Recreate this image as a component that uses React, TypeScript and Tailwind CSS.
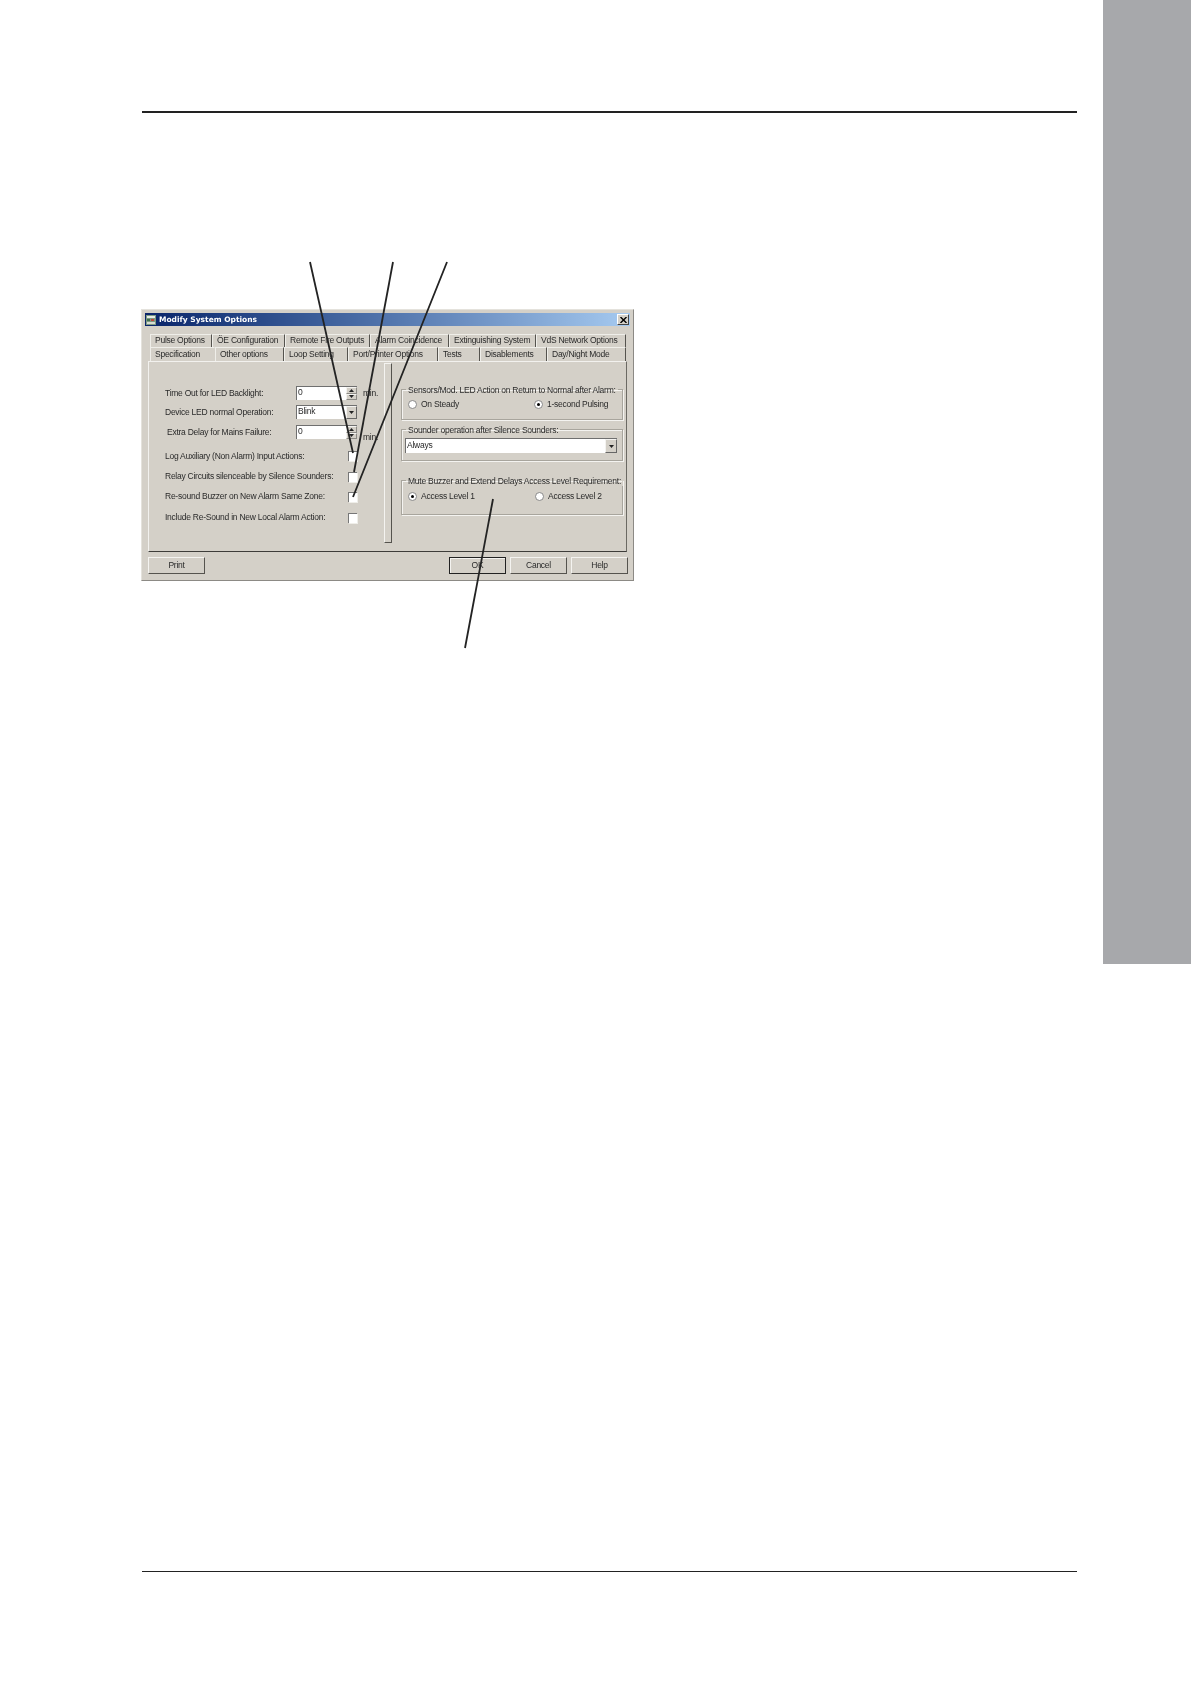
const rowOne = [
  { label: 'Pulse Options', width: 'w-[62px]' },
  { label: 'ÖE Configuration', width: 'w-[73px]' },
  { label: 'Remote Fire Outputs', width: 'w-[85px]' },
  { label: 'Alarm Coincidence', width: 'w-[79px]' },
  { label: 'Extinguishing System', width: 'w-[87px]' },
  { label: 'VdS Network Options', width: 'w-[90px]' },
];

const rowTwo = [
  { label: 'Specification', width: 'w-[65px]', edge: 'border-r-transparent' },
  { label: 'Other options', width: 'w-[69px]', edge: 'border-r-[#55534e] bg-[#d4d0c8] relative z-[1] -mb-[2px]' },
  { label: 'Loop Setting', width: 'w-[64px]', edge: 'border-r-[#55534e]' },
  { label: 'Port/Printer Options', width: 'w-[90px]', edge: 'border-r-[#55534e]' },
  { label: 'Tests', width: 'w-[42px]', edge: 'border-r-[#55534e]' },
  { label: 'Disablements', width: 'w-[67px]', edge: 'border-r-[#55534e]' },
  { label: 'Day/Night Mode', width: 'w-[79px]', edge: 'border-r-[#55534e]' },
];

function Tab({ label, width, edge = 'border-r-[#55534e]' }: { label: string; width: string; edge?: string }) {
  return (
    <div className={`${width} ${edge} h-full flex items-center pl-[4px] pb-[1px] whitespace-nowrap border-t border-l border-r border-t-[#efeee9] border-l-[#efeee9]`}>
      {label}
    </div>
  );
}

function Arrow({ up }: { up?: boolean }) {
  return (
    <svg width="5" height="3" viewBox="0 0 5 3" className={up ? 'rotate-180' : ''}>
      <path d="M0 0h5L2.5 3z" fill="#222" />
    </svg>
  );
}

function Spinner() {
  return (
    <div className="flex flex-col w-[11px] h-full">
      <div className="flex-1 bg-[#d4d0c8] flex items-center justify-center border border-t-[#f4f3f0] border-l-[#f4f3f0] border-r-[#8c8a85] border-b-[#8c8a85]">
        <Arrow up />
      </div>
      <div className="flex-1 bg-[#d4d0c8] flex items-center justify-center border border-t-[#f4f3f0] border-l-[#f4f3f0] border-r-[#8c8a85] border-b-[#8c8a85]">
        <Arrow />
      </div>
    </div>
  );
}

function DropButton({ size }: { size: string }) {
  return (
    <div className={`${size} h-full bg-[#d4d0c8] flex items-center justify-center border border-t-[#f4f3f0] border-l-[#f4f3f0] border-r-[#666] border-b-[#666]`}>
      <Arrow />
    </div>
  );
}

function Field({ text, spin }: { text: string; spin?: boolean }) {
  return (
    <div className="w-[61px] h-[14px] bg-white flex border-t border-l border-t-[#6f6f6f] border-l-[#6f6f6f]">
      <span className="flex-1 pl-[1px] leading-[10px]">{text}</span>
      {spin ? <Spinner /> : <DropButton size="w-[11px]" />}
    </div>
  );
}

function Check() {
  return <div className="w-[9px] h-[10px] bg-white border-t border-l border-t-[#777] border-l-[#777] shadow-[1px_1px_0_#efeee9]" />;
}

function Radio({ label, on, width }: { label: string; on?: boolean; width: string }) {
  return (
    <div className={`${width} flex items-center gap-[4px]`}>
      <div className="w-[9px] h-[9px] rounded-full bg-white border border-[#888] flex items-center justify-center">
        {on && <div className="w-[3px] h-[3px] rounded-full bg-black" />}
      </div>
      <span>{label}</span>
    </div>
  );
}

function Group({ title, size, children }: { title: string; size: string; children: React.ReactNode }) {
  return (
    <fieldset className={`${size} w-[222px] min-w-0 border border-[#a8a59d] shadow-[1px_1px_0_#f4f3f0,inset_1px_1px_0_#f4f3f0]`}>
      <legend className="ml-[4px] px-[2px] pt-[1px] leading-[10px] whitespace-nowrap">{title}</legend>
      {children}
    </fieldset>
  );
}

const rows = [
  { label: 'Log Auxiliary (Non Alarm) Input Actions:', height: 'h-[26px]' },
  { label: 'Relay Circuits silenceable by Silence Sounders:', height: 'h-[15px]' },
  { label: 'Re-sound Buzzer on New Alarm Same Zone:', height: 'h-[25px]' },
  { label: 'Include Re-Sound in New Local Alarm Action:', height: 'h-[17px]' },
];

function Button({ label, isDefault }: { label: string; isDefault?: boolean }) {
  return (
    <div
      className={`w-[57px] h-[17px] flex items-center justify-center border ${
        isDefault
          ? 'border-[#222] shadow-[inset_1px_1px_0_#f4f3f0]'
          : 'border-t-[#f4f3f0] border-l-[#f4f3f0] border-r-[#55534e] border-b-[#55534e]'
      }`}
    >
      {label}
    </div>
  );
}

function Dialog() {
  return (
    <div className="w-[493px] h-[272px] -ml-[1px] bg-[#d4d0c8] border border-t-[#e4e2dc] border-l-[#e4e2dc] border-r-[#8c8a85] border-b-[#8c8a85] p-[3px] text-[8.5px] tracking-[-0.25px] text-[#2a2a2a] font-['Liberation_Sans',sans-serif] blur-[0.35px]">
      <div className="h-[13px] px-[1px] flex items-center justify-between bg-gradient-to-r from-[#0a246a] to-[#a6caf0]">
        <div className="flex items-center gap-[3px]">
          <svg width="10" height="10" viewBox="0 0 10 10">
            <rect width="10" height="10" fill="#7d9a84" />
            <rect x="1" y="1" width="8" height="2" fill="#e8ece6" />
            <rect x="1" y="4" width="3" height="2" fill="#3f6e4c" />
            <rect x="5" y="4" width="3" height="2" fill="#c0463c" />
            <rect x="1" y="7" width="8" height="2" fill="#d8dcd2" />
          </svg>
          <span className="text-white font-bold text-[7.5px] tracking-normal font-['DejaVu_Sans',sans-serif]">Modify System Options</span>
        </div>
        <div className="w-[12px] h-[11px] bg-[#d4d0c8] flex items-center justify-center border border-t-white border-l-white border-r-[#444] border-b-[#444]">
          <svg width="7" height="6" viewBox="0 0 7 6">
            <path d="M0.5 0l6 6M6.5 0l-6 6" stroke="#000" strokeWidth="1.4" />
          </svg>
        </div>
      </div>

      <div className="pl-[5px] pt-[8px]">
        <div className="flex h-[13px]">
          {rowOne.map((tab) => (
            <Tab key={tab.label} label={tab.label} width={tab.width} />
          ))}
        </div>
        <div className="flex h-[14px]">
          {rowTwo.map((tab) => (
            <Tab key={tab.label} label={tab.label} width={tab.width} edge={tab.edge} />
          ))}
        </div>
      </div>

      <div className="w-[479px] h-[191px] ml-[3px] flex border border-t-[#f2f1ee] border-l-[#f2f1ee] border-r-[#6b6963] border-b-[#3d3c39]">
        <div className="w-[235px] shrink-0 pt-[21px] pl-[16px]">
          <div className="flex items-center h-[20px]">
            <span className="w-[131px]">Time Out for LED Backlight:</span>
            <Field text="0" spin />
            <span className="ml-[6px]">min.</span>
          </div>
          <div className="flex items-center h-[18px]">
            <span className="w-[131px]">Device LED normal Operation:</span>
            <Field text="Blink" />
          </div>
          <div className="flex items-center h-[22px]">
            <span className="w-[129px] ml-[2px]">Extra Delay for Mains Failure:</span>
            <Field text="0" spin />
            <span className="ml-[6px] mt-[10px]">min.</span>
          </div>
          {rows.map((row) => (
            <div key={row.label} className={`flex items-center ${row.height}`}>
              <span className="w-[183px] whitespace-nowrap">{row.label}</span>
              <Check />
            </div>
          ))}
        </div>

        <div className="w-[8px] h-[180px] shrink-0 mt-[1px] border border-t-[#f4f3f0] border-l-[#f4f3f0] border-r-[#55534e] border-b-[#55534e]" />

        <div className="pl-[9px] pt-[22px] flex flex-col">
          <Group title="Sensors/Mod. LED Action on Return to Normal after Alarm:" size="h-[36px]">
            <div className="flex pl-[6px] pt-[3px]">
              <Radio label="On Steady" width="w-[126px]" />
              <Radio label="1-second Pulsing" on width="w-[85px]" />
            </div>
          </Group>
          <div className="mt-[4px]">
            <Group title="Sounder operation after Silence Sounders:" size="h-[37px]">
              <div className="ml-[3px] mt-[3px] w-[212px] h-[15px] flex bg-white border-t border-l border-t-[#6f6f6f] border-l-[#6f6f6f]">
                <span className="flex-1 pl-[1px] leading-[13px]">Always</span>
                <DropButton size="w-[12px]" />
              </div>
            </Group>
          </div>
          <div className="mt-[14px]">
            <Group title="Mute Buzzer and Extend Delays Access Level Requirement:" size="h-[40px]">
              <div className="flex pl-[6px] pt-[4px]">
                <Radio label="Access Level 1" on width="w-[127px]" />
                <Radio label="Access Level 2" width="w-[85px]" />
              </div>
            </Group>
          </div>
        </div>
      </div>

      <div className="flex ml-[3px] mt-[5px] w-[480px] gap-[4px]">
        <Button label="Print" />
        <div className="flex-1" />
        <Button label="OK" isDefault />
        <Button label="Cancel" />
        <Button label="Help" />
      </div>
    </div>
  );
}

export default function App() {
  return (
    <div className="relative w-[1191px] h-[1684px] bg-white overflow-hidden flex">
      <div className="w-[1103px] pl-[142px]">
        <div className="w-[935px] h-[2px] mt-[111px] bg-[#222]" />
        <div className="mt-[196px]">
          <Dialog />
        </div>
        <div className="w-[935px] h-[1.4px] mt-[990px] bg-[#222]" />
      </div>
      <div className="w-[88px] h-[964px] bg-[#a7a8ab]" />

      {/* leader lines sit over the dialog */}
      <svg className="absolute inset-0 w-[1191px] h-[1684px] pointer-events-none" viewBox="0 0 1191 1684">
        <g stroke="#232323" strokeWidth="1.8" fill="none">
          <path d="M310 262L353 453" />
          <path d="M393 262L354 472" />
          <path d="M447 262L353 497" />
          <path d="M493 499L465 648" />
        </g>
      </svg>
    </div>
  );
}
